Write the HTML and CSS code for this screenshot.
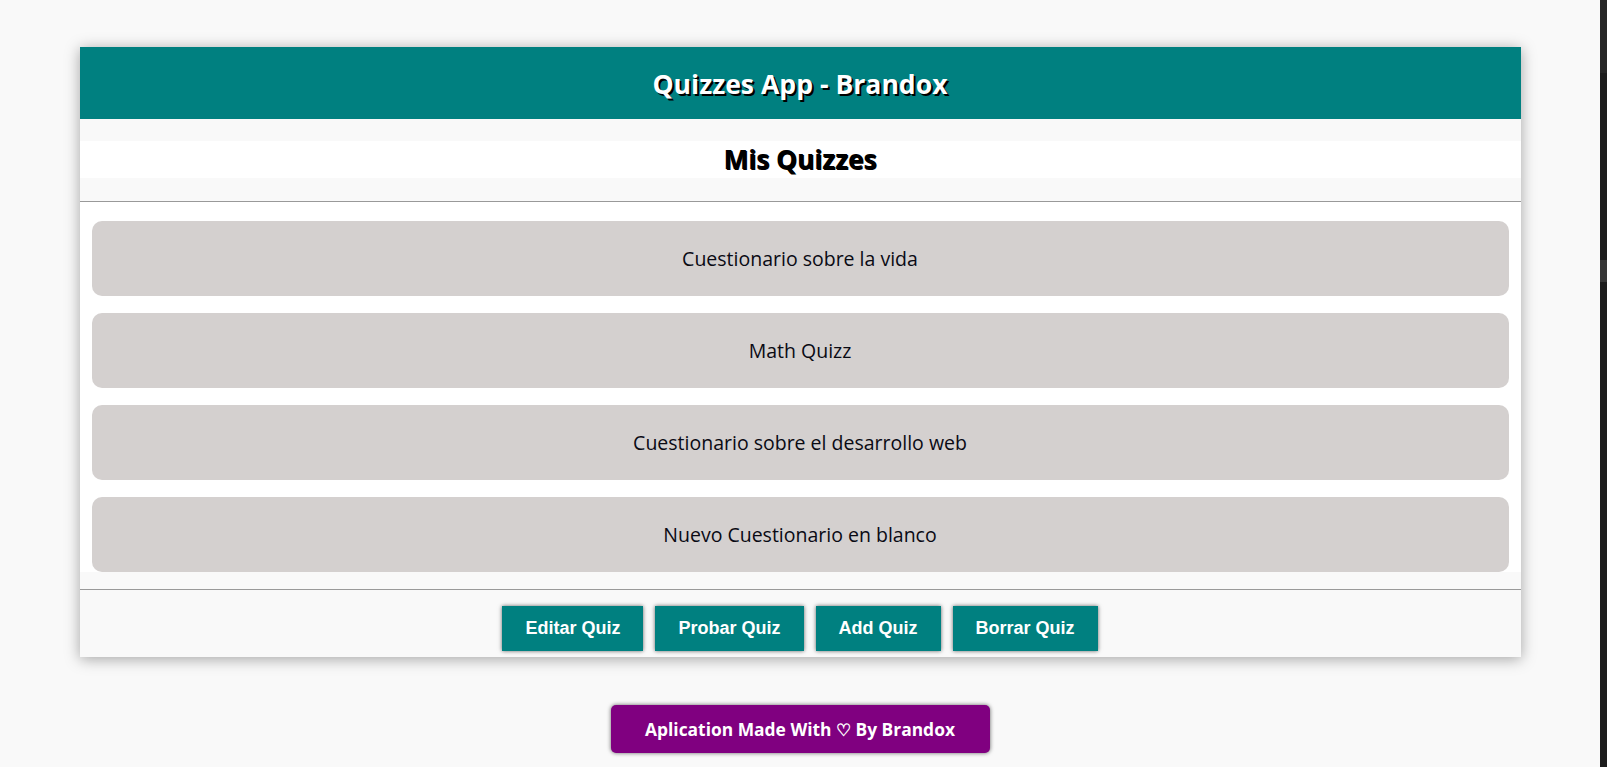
FILE: index.html
```html
<!DOCTYPE html>
<html lang="es">
<head>
<meta charset="utf-8">
<title>Quizzes App - Brandox</title>
<link rel="stylesheet" href="styles.css">
</head>
<body>
<div class="screen">
  <main class="page">
    <section class="card">
      <header class="card-header">
        <h1 class="app-title">Quizzes App - Brandox</h1>
      </header>
      <h2 class="section-title">Mis Quizzes</h2>
      <ul class="quiz-list">
        <li class="quiz-item">Cuestionario sobre la vida</li>
        <li class="quiz-item">Math Quizz</li>
        <li class="quiz-item">Cuestionario sobre el desarrollo web</li>
        <li class="quiz-item">Nuevo Cuestionario en blanco</li>
      </ul>
      <div class="actions">
        <button class="action-btn">Editar Quiz</button>
        <button class="action-btn">Probar Quiz</button>
        <button class="action-btn">Add Quiz</button>
        <button class="action-btn">Borrar Quiz</button>
      </div>
    </section>
    <footer class="footer">
      <button class="credit-btn">Aplication Made With ♡ By Brandox</button>
    </footer>
  </main>
  <aside class="side-strip">
    <div class="strip-top"></div>
    <div class="strip-thumb"></div>
  </aside>
</div>
</body>
</html>
```
FILE: styles.css
```css
html, body {
  margin: 0;
  padding: 0;
  height: 100%;
  background: #f9f9f9;
}

body {
  font-family: "Open Sans", "Noto Sans", sans-serif;
  overflow: hidden;
}

.screen {
  display: flex;
  height: 767px;
}

.page {
  flex: 1;
  display: flex;
  flex-direction: column;
  align-items: center;
  padding-top: 47px;
}

.card {
  width: 1441px;
  background: #f9f9f9;
  box-shadow: 0 2px 14px rgba(0, 0, 0, 0.35);
  display: flex;
  flex-direction: column;
}

.card-header {
  height: 72px;
  background: #008080;
  display: flex;
  align-items: center;
  justify-content: center;
}

.app-title {
  margin: 0;
  color: #fff;
  font-size: 26.6px;
  font-weight: 700;
  line-height: 32px;
  text-shadow: 2px 2px 0 #000;
  position: relative;
  top: 1px;
}

.section-title {
  margin: 22px 0 23px;
  height: 37px;
  background: #fff;
  color: #000;
  text-align: center;
  font-size: 26.3px;
  font-weight: 700;
  line-height: 37px;
  text-shadow: 1px 1px 0 #000;
}

.quiz-list {
  list-style: none;
  margin: 0 0 17px;
  padding: 19px 12px 0;
  background: #fff;
  border-top: 1px solid #999;
  display: flex;
  flex-direction: column;
  gap: 17px;
}

.quiz-item {
  height: 75px;
  background: #d4d0cf;
  border-radius: 10px;
  display: flex;
  align-items: center;
  justify-content: center;
  font-size: 19.5px;
  color: #0a0a14;
}

.actions {
  border-top: 1px solid #999;
  padding: 16px 0 6px;
  display: flex;
  justify-content: center;
  gap: 12px;
}

.action-btn {
  font-family: "Liberation Sans", Arial, sans-serif;
  font-size: 18px;
  font-weight: 700;
  line-height: 21px;
  color: #fff;
  background: #008080;
  border: none;
  padding: 12px 23px;
  box-shadow: 0 0 4px rgba(0, 0, 0, 0.6);
  cursor: pointer;
}

.footer {
  margin-top: 48px;
  display: flex;
  justify-content: center;
}

.credit-btn {
  font-family: "Open Sans", "Noto Sans", sans-serif;
  font-size: 17.4px;
  font-weight: 700;
  line-height: 22px;
  color: #fff;
  background: #800080;
  border: none;
  border-radius: 5px;
  width: 379px;
  height: 48px;
  box-shadow: 0 0 4px rgba(0, 0, 0, 0.6);
  cursor: pointer;
}

.side-strip {
  width: 7px;
  background: #1c1c1c;
  display: flex;
  flex-direction: column;
}

.strip-top {
  height: 73px;
  background: #262626;
}

.strip-thumb {
  margin-top: 187px;
  height: 22px;
  background: #363636;
}
```
